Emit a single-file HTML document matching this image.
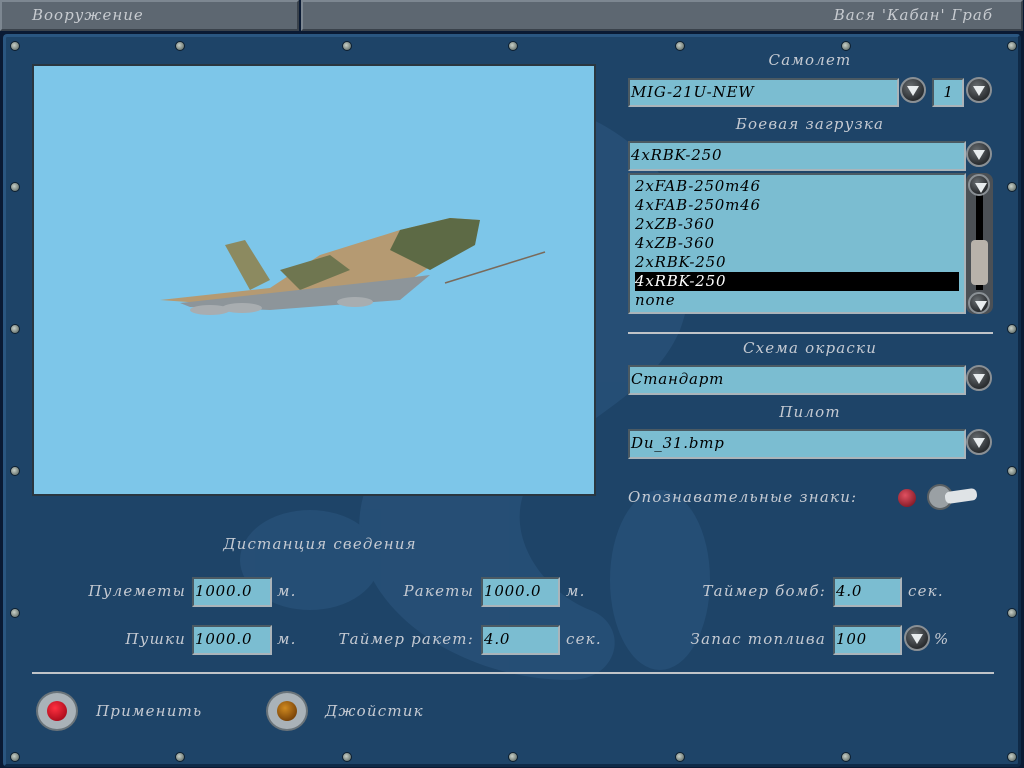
<!DOCTYPE html>
<html><head><meta charset="utf-8"><style>
*{margin:0;padding:0;box-sizing:border-box}
body{width:1024px;height:768px;overflow:hidden;background:#0a1a33;position:relative;font-family:"DejaVu Serif","Liberation Serif",serif;font-style:italic}
.tb{position:absolute;top:0;height:31px;background:#5d6771;border:2px solid #3a424b;border-top-color:#7d8791;border-left-color:#7d8791;color:#c7cbd0;font-size:15px;line-height:27px;letter-spacing:1px}
.panel{position:absolute;left:3px;top:34px;width:1018px;height:733px;background:#1e4468;border:3px solid #0f2a47;border-top-color:#2a5680;border-left-color:#2a5680;border-radius:4px}
.a{position:absolute}
.t{position:absolute;color:#c5cad2;font-size:15px;white-space:nowrap;letter-spacing:1.2px;line-height:20px}
.r{text-align:right}
.c{text-align:center;width:300px}
.in{position:absolute;background:#7bbdd1;border:2px solid #4b5a63;border-bottom-color:#aab4ba;border-right-color:#aab4ba;color:#000;font-size:15px;padding-left:1px;line-height:24px;white-space:nowrap;letter-spacing:.8px}
.btn{position:absolute;width:26px;height:26px;border-radius:50%;background:radial-gradient(circle at 40% 35%,#6a6f73,#2a2d30 70%);border:2px solid #8a9095}
.btn:after{content:"";position:absolute;left:5px;top:7px;border-left:6px solid transparent;border-right:6px solid transparent;border-top:10px solid #e8ecee}
.sc{position:absolute;width:10px;height:10px;border-radius:50%;background:radial-gradient(circle at 40% 40%,#c8d0c8,#4d5a55);border:1px solid #0d1f30}
</style></head><body>
<div class="tb" style="left:0;width:299px;padding-left:30px">Вооружение</div>
<div class="tb" style="left:301px;width:722px;text-align:right;padding-right:28px">Вася 'Кабан' Граб</div>
<div class="panel"></div>
<svg class="a" style="left:200px;top:60px" width="600" height="650"><g fill="#2d5882" opacity=".5"><path d="M330 40c120 20 190 120 150 230-30 70-110 90-150 150-30 50 10 110 60 130 40 15 30 70-20 70-100 0-200-60-210-140-10-90 80-120 80-190 0-50-60-60-60-110C180 80 250 30 330 40z"/><ellipse cx="110" cy="500" rx="70" ry="50"/><ellipse cx="460" cy="520" rx="50" ry="90"/></g></svg>
<div class="sc" style="left:10px;top:41px"></div><div class="sc" style="left:175px;top:41px"></div><div class="sc" style="left:342px;top:41px"></div><div class="sc" style="left:508px;top:41px"></div><div class="sc" style="left:675px;top:41px"></div><div class="sc" style="left:841px;top:41px"></div><div class="sc" style="left:1007px;top:41px"></div>
<div class="sc" style="left:10px;top:752px"></div><div class="sc" style="left:175px;top:752px"></div><div class="sc" style="left:342px;top:752px"></div><div class="sc" style="left:508px;top:752px"></div><div class="sc" style="left:675px;top:752px"></div><div class="sc" style="left:841px;top:752px"></div><div class="sc" style="left:1007px;top:752px"></div>
<div class="sc" style="left:10px;top:182px"></div><div class="sc" style="left:10px;top:324px"></div><div class="sc" style="left:10px;top:466px"></div><div class="sc" style="left:10px;top:608px"></div>
<div class="sc" style="left:1007px;top:182px"></div><div class="sc" style="left:1007px;top:324px"></div><div class="sc" style="left:1007px;top:466px"></div><div class="sc" style="left:1007px;top:608px"></div>
<div class="a" style="left:32px;top:64px;width:564px;height:432px;background:#7dc6e9;border:2px solid #2a3640"></div>
<svg class="a" style="left:150px;top:210px" width="400" height="120">
<path d="M75 35 L95 30 L120 70 L100 80Z" fill="#8c8a60"/>
<path d="M10 90 L120 78 L170 45 L250 20 L300 8 L330 10 L320 30 L260 70 L180 88 L80 95Z" fill="#b59a72"/>
<path d="M250 20 L300 8 L330 10 L325 35 L280 60 L240 40Z" fill="#5d6a45"/>
<path d="M130 60 L180 45 L200 60 L150 80Z" fill="#6f7650"/>
<path d="M30 93 L240 70 L280 65 L250 90 L120 100 L40 97Z" fill="#8d959a"/>
<ellipse cx="60" cy="100" rx="20" ry="5" fill="#a8adb0"/><ellipse cx="92" cy="98" rx="20" ry="5" fill="#a8adb0"/><ellipse cx="205" cy="92" rx="18" ry="5" fill="#a8adb0"/>
<line x1="295" y1="73" x2="395" y2="42" stroke="#7a6a5a" stroke-width="1.5"/>
</svg>
<div class="t c" style="left:660px;top:50px">Самолет</div>
<div class="in" style="left:628px;top:78px;width:271px;height:29px">MIG-21U-NEW</div>
<div class="btn" style="left:900px;top:77px"></div>
<div class="in" style="left:932px;top:78px;width:32px;height:29px;text-align:center">1</div>
<div class="btn" style="left:966px;top:77px"></div>
<div class="t c" style="left:660px;top:114px">Боевая загрузка</div>
<div class="in" style="left:628px;top:141px;width:338px;height:30px">4xRBK-250</div>
<div class="btn" style="left:966px;top:141px"></div>
<div class="in" style="left:628px;top:173px;width:338px;height:141px;line-height:19px;padding:2px 5px">2xFAB-250m46<br>4xFAB-250m46<br>2xZB-360<br>4xZB-360<br>2xRBK-250<br><span style="display:block;background:#000;color:#fff">4xRBK-250</span>none</div>
<div class="a" style="left:966px;top:173px;width:27px;height:141px;background:#4b5055;border-radius:8px"></div>
<div class="a" style="left:976px;top:195px;width:7px;height:95px;background:#000"></div>
<div class="a" style="left:971px;top:240px;width:17px;height:45px;background:#b8b2aa;border-radius:4px"></div>
<div class="btn" style="left:968px;top:174px;width:22px;height:22px"></div>
<div class="btn" style="left:968px;top:292px;width:22px;height:22px"></div>
<div class="a" style="left:628px;top:332px;width:365px;height:2px;background:#c0c4c8"></div>
<div class="t c" style="left:660px;top:338px">Схема окраски</div>
<div class="in" style="left:628px;top:365px;width:338px;height:30px">Стандарт</div>
<div class="btn" style="left:966px;top:365px"></div>
<div class="t c" style="left:660px;top:402px">Пилот</div>
<div class="in" style="left:628px;top:429px;width:338px;height:30px">Du_31.bmp</div>
<div class="btn" style="left:966px;top:429px"></div>
<div class="t" style="left:628px;top:487px">Опознавательные знаки:</div>
<div class="a" style="left:898px;top:489px;width:18px;height:18px;border-radius:50%;background:radial-gradient(circle at 40% 35%,#e05060,#6a0c18)"></div>
<div class="a" style="left:927px;top:484px;width:26px;height:26px;border-radius:50%;background:#9aa0a4;border:2px solid #5a6064"></div>
<div class="a" style="left:945px;top:490px;width:32px;height:12px;background:#dfe3e6;border-radius:5px;transform:rotate(-8deg)"></div>
<div class="t c" style="left:170px;top:534px">Дистанция сведения</div>
<div class="t r" style="right:838px;top:581px">Пулеметы</div>
<div class="in" style="left:192px;top:577px;width:80px;height:30px">1000.0</div>
<div class="t" style="left:277px;top:581px">м.</div>
<div class="t r" style="right:550px;top:581px">Ракеты</div>
<div class="in" style="left:481px;top:577px;width:79px;height:30px">1000.0</div>
<div class="t" style="left:566px;top:581px">м.</div>
<div class="t r" style="right:198px;top:581px">Таймер бомб:</div>
<div class="in" style="left:833px;top:577px;width:69px;height:30px">4.0</div>
<div class="t" style="left:908px;top:581px">сек.</div>
<div class="t r" style="right:838px;top:629px">Пушки</div>
<div class="in" style="left:192px;top:625px;width:80px;height:30px">1000.0</div>
<div class="t" style="left:277px;top:629px">м.</div>
<div class="t r" style="right:550px;top:629px">Таймер ракет:</div>
<div class="in" style="left:481px;top:625px;width:79px;height:30px">4.0</div>
<div class="t" style="left:566px;top:629px">сек.</div>
<div class="t r" style="right:198px;top:629px">Запас топлива</div>
<div class="in" style="left:833px;top:625px;width:69px;height:30px">100</div>
<div class="btn" style="left:904px;top:625px"></div>
<div class="t" style="left:934px;top:629px">%</div>
<div class="a" style="left:32px;top:672px;width:962px;height:2px;background:#c0c4c8"></div>
<div class="a" style="left:36px;top:691px;width:42px;height:40px;border-radius:50%;background:#a9b2b8;border:2px solid #6a747a"></div>
<div class="a" style="left:47px;top:701px;width:20px;height:20px;border-radius:50%;background:radial-gradient(circle at 40% 35%,#ff3040,#900010)"></div>
<div class="t" style="left:96px;top:701px">Применить</div>
<div class="a" style="left:266px;top:691px;width:42px;height:40px;border-radius:50%;background:#a9b2b8;border:2px solid #6a747a"></div>
<div class="a" style="left:277px;top:701px;width:20px;height:20px;border-radius:50%;background:radial-gradient(circle at 40% 35%,#d08a20,#5a2a00)"></div>
<div class="t" style="left:325px;top:701px">Джойстик</div>
</body></html>
